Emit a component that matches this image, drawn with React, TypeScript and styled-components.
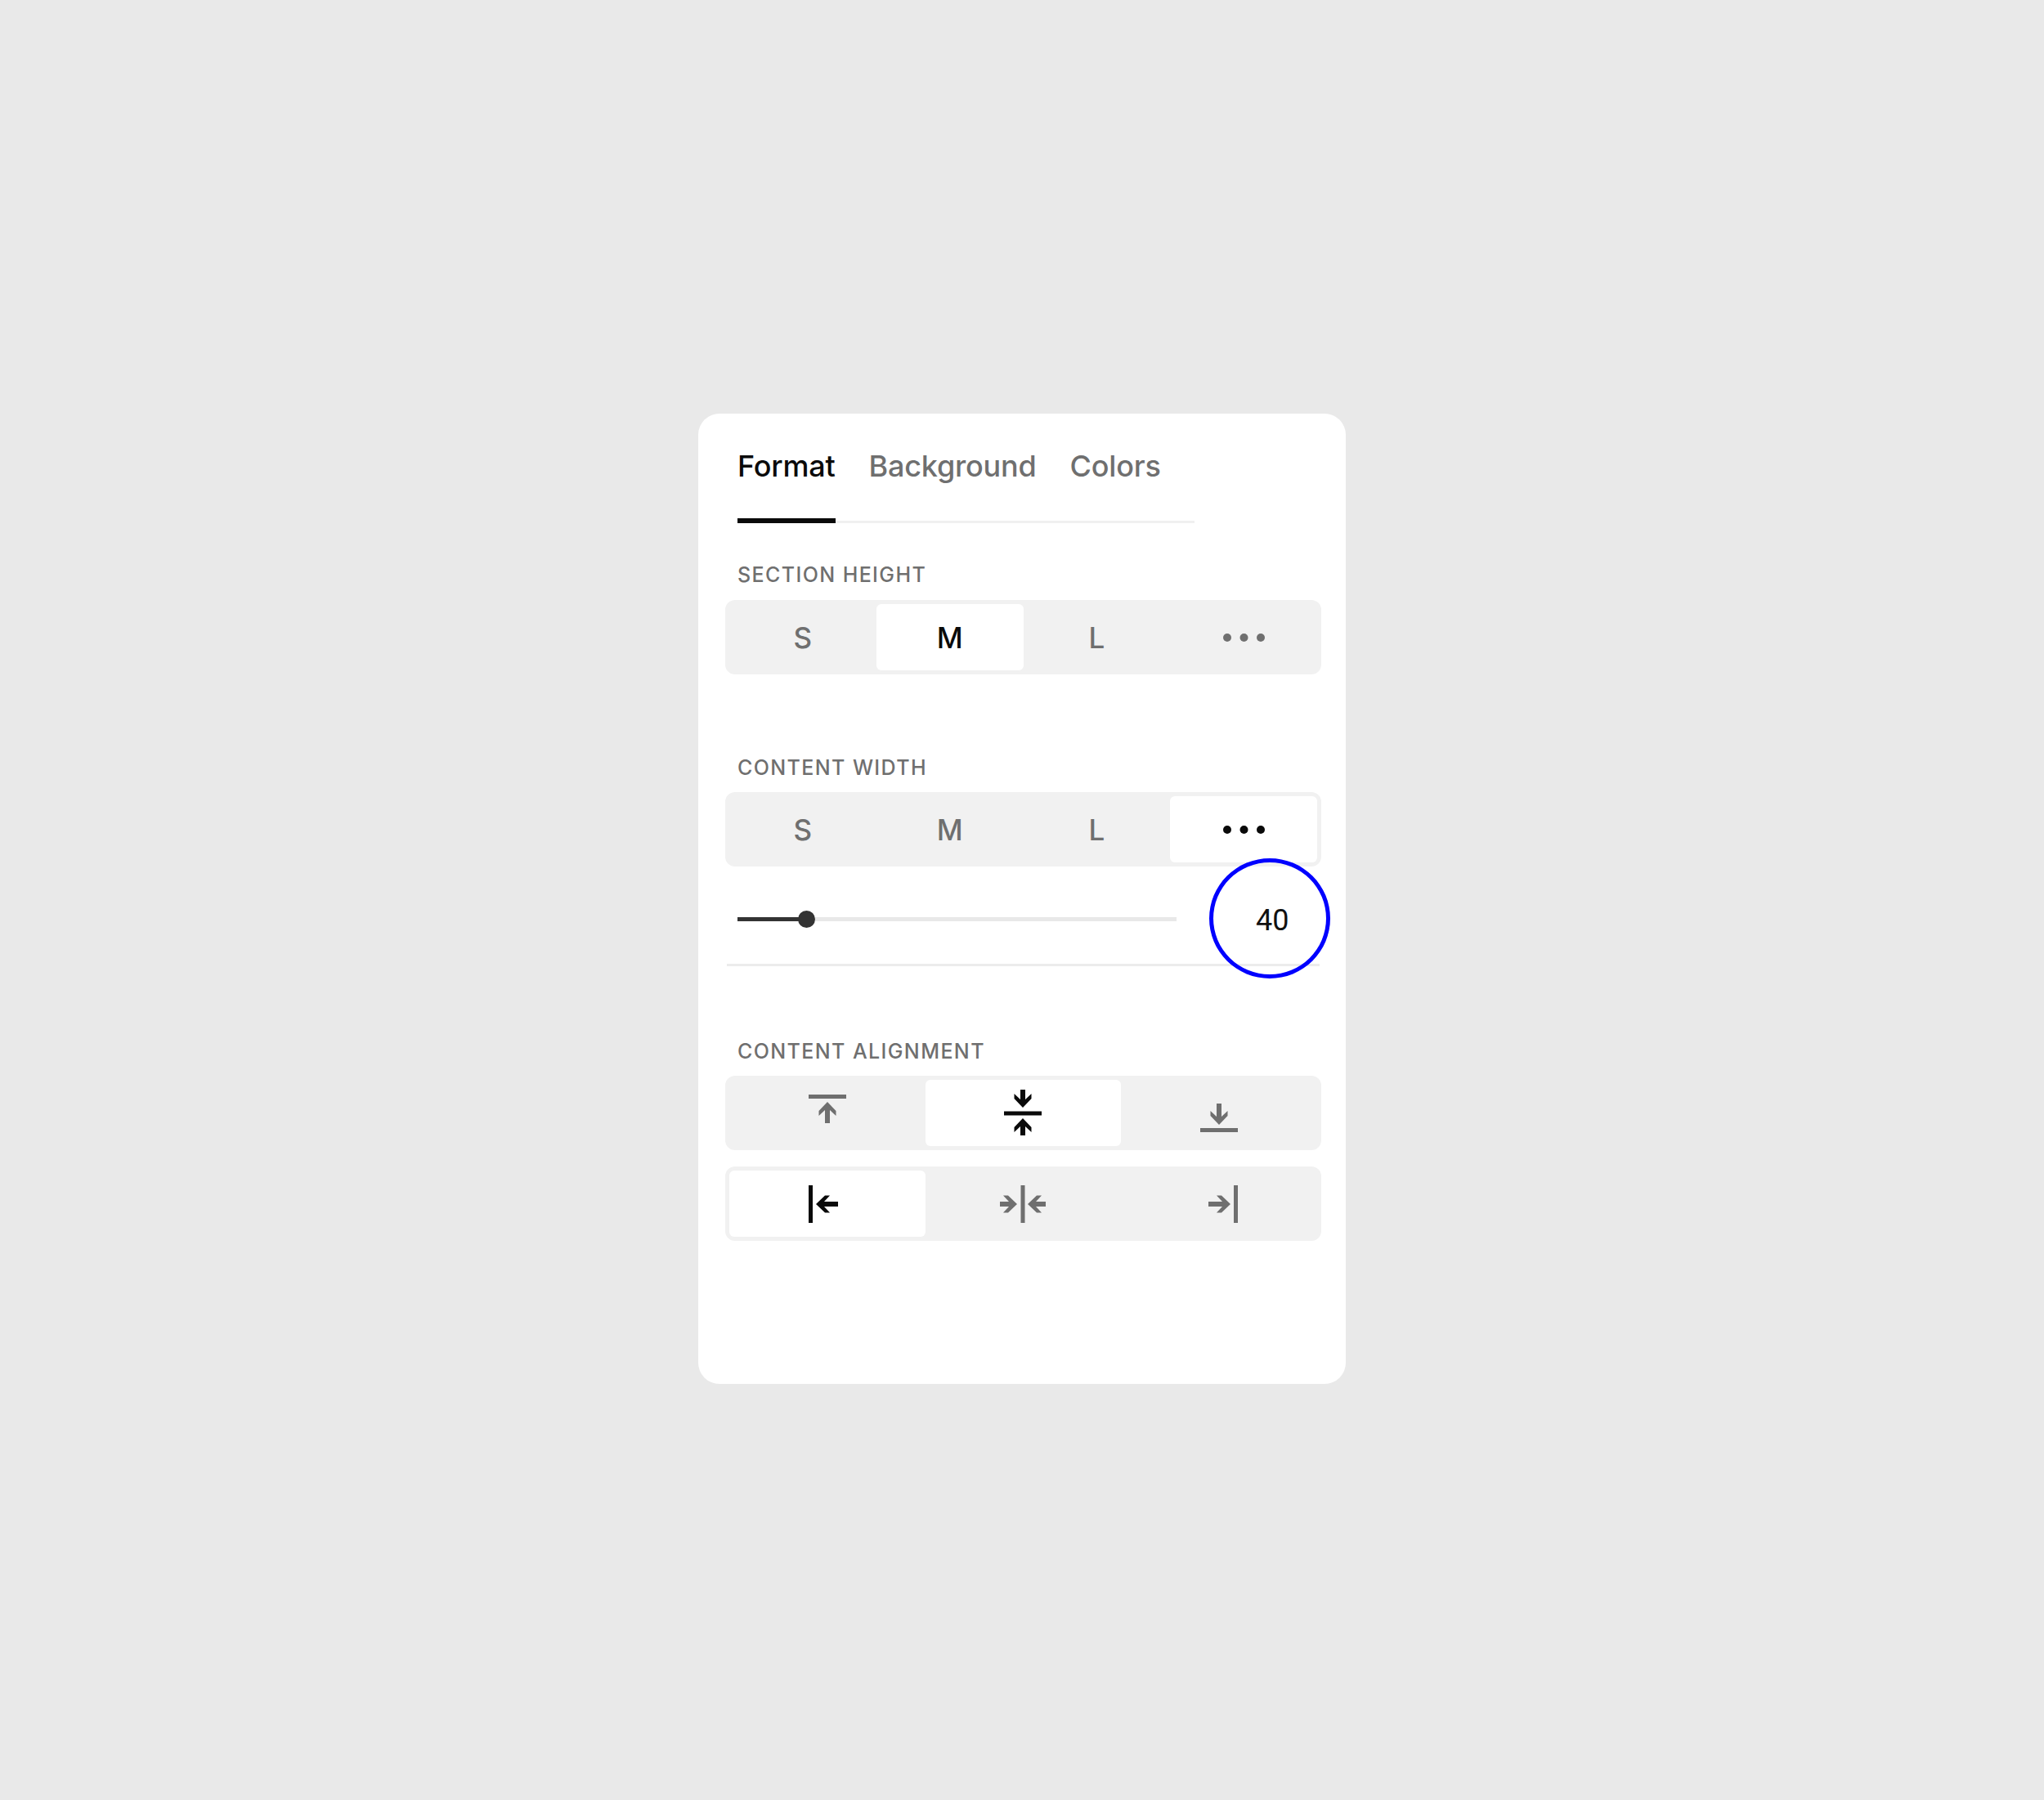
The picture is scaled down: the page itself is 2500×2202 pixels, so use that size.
import React from 'react';
import styled, { createGlobalStyle } from 'styled-components';

const GlobalStyle = createGlobalStyle`
  html, body {
    margin: 0;
    padding: 0;
    background: #e9e9e9;
    font-family: Inter, "Liberation Sans", sans-serif;
  }
`;

const Page = styled.div`
  min-height: 2202px;
  box-sizing: border-box;
  padding-top: 506px;
  display: flex;
  justify-content: center;
`;

const Card = styled.div`
  width: 792px;
  height: 1187px;
  box-sizing: border-box;
  background: #fff;
  border-radius: 26px;
  padding: 33px 30px 0 33px;
`;

const Tabs = styled.div`
  display: flex;
  gap: 41px;
  width: 559px;
  height: 101px;
  box-sizing: border-box;
  margin-left: 15px;
  border-bottom: 3px solid #f0f0f0;
`;

const Tab = styled.div<{ $active?: boolean }>`
  height: 101px;
  box-sizing: border-box;
  padding-top: 9px;
  font-size: 36px;
  line-height: 44px;
  font-weight: 500;
  letter-spacing: -0.2px;
  color: ${(p) => (p.$active ? '#0a0a0a' : '#6f6f6f')};
  border-bottom: ${(p) => (p.$active ? '6px solid #0a0a0a' : 'none')};
`;

const Label = styled.div<{ $top: number; $bottom: number }>`
  margin: ${(p) => p.$top}px 0 ${(p) => p.$bottom}px 15px;
  font-size: 25px;
  line-height: 30px;
  font-weight: 500;
  letter-spacing: 1.4px;
  color: #6f6f6f;
`;

const Segments = styled.div<{ $cols: number; $gap?: number }>`
  display: grid;
  grid-template-columns: repeat(${(p) => p.$cols}, 1fr);
  height: 91px;
  box-sizing: border-box;
  padding: 5px;
  margin-top: ${(p) => p.$gap ?? 0}px;
  background: #f1f1f1;
  border-radius: 12px;
`;

const Segment = styled.div<{ $active?: boolean }>`
  display: flex;
  align-items: center;
  justify-content: center;
  font-size: 35px;
  font-weight: 500;
  color: ${(p) => (p.$active ? '#0a0a0a' : '#6f6f6f')};
  background: ${(p) => (p.$active ? '#fff' : 'transparent')};
  border-radius: 6px;
`;

const SliderRow = styled.div`
  position: relative;
  display: flex;
  align-items: center;
  height: 122px;
  margin: 0 2px;
  padding: 10px 0 0 13px;
  box-sizing: border-box;
  border-bottom: 3px solid #ececec;
`;

const Track = styled.div`
  position: relative;
  width: 537px;
  height: 5px;
  background: #e8e8e8;
`;

const TrackFill = styled.div`
  height: 100%;
  background: #333;
`;

const Thumb = styled.div`
  position: absolute;
  top: -8px;
  width: 21px;
  height: 21px;
  margin-left: -10px;
  border-radius: 50%;
  background: #333;
`;

const Value = styled.div`
  margin-left: 97px;
  font-family: Roboto, sans-serif;
  font-size: 36px;
  line-height: 42px;
  color: #111;
  position: relative;
  top: 1px;
`;

const Ring = styled.div`
  position: absolute;
  left: 590px;
  top: -10px;
  width: 148px;
  height: 147px;
  box-sizing: border-box;
  border: 5px solid #0000ff;
  border-radius: 50%;
`;

const Dots = () => (
  <svg width="51" height="10" viewBox="0 0 51 10" fill="currentColor">
    <circle cx="5" cy="5" r="5" />
    <circle cx="25.5" cy="5" r="5" />
    <circle cx="46" cy="5" r="5" />
  </svg>
);

const UP = (len: number) => `M0 0L10.5 11V17L3 10V${len}H-3V10L-10.5 17V11Z`;

const Arrow = ({ x, y, angle, len = 26 }: { x: number; y: number; angle: number; len?: number }) => (
  <path d={UP(len)} transform={`translate(${x} ${y}) rotate(${angle})`} />
);

const IconBox = styled.svg`
  width: 46px;
  height: 46px;
  overflow: visible;
  fill: currentColor;
`;

const AlignTop = () => (
  <IconBox viewBox="0 0 46 46">
    <rect x="0" y="0" width="46" height="5" />
    <Arrow x={23} y={9} angle={0} />
  </IconBox>
);

const AlignMiddle = () => (
  <IconBox viewBox="0 0 46 46">
    <rect x="0" y="20.5" width="46" height="5" />
    <Arrow x={23} y={16} angle={180} len={22} />
    <Arrow x={23} y={29} angle={0} len={21} />
  </IconBox>
);

const AlignBottom = () => (
  <IconBox viewBox="0 0 46 46">
    <rect x="0" y="41" width="46" height="5" />
    <Arrow x={23} y={37} angle={180} />
  </IconBox>
);

const AlignLeft = () => (
  <IconBox viewBox="0 0 46 46">
    <rect x="0" y="0" width="5" height="46" />
    <Arrow x={9} y={23} angle={-90} len={27} />
  </IconBox>
);

const AlignCenter = () => (
  <IconBox viewBox="0 0 46 46">
    <rect x="20.5" y="0" width="5" height="46" />
    <Arrow x={16} y={23} angle={90} len={21} />
    <Arrow x={29} y={23} angle={-90} len={22} />
  </IconBox>
);

const AlignRight = () => (
  <IconBox viewBox="0 0 46 46">
    <rect x="41" y="0" width="5" height="46" />
    <Arrow x={37} y={23} angle={90} len={27} />
  </IconBox>
);

const sizes = ['S', 'M', 'L'];

export default function App() {
  return (
    <Page>
      <GlobalStyle />
      <Card>
        <Tabs>
          <Tab $active>Format</Tab>
          <Tab>Background</Tab>
          <Tab>Colors</Tab>
        </Tabs>

        <Label $top={48} $bottom={16}>SECTION HEIGHT</Label>
        <Segments $cols={4}>
          {sizes.map((s) => (
            <Segment key={s} $active={s === 'M'}>{s}</Segment>
          ))}
          <Segment><Dots /></Segment>
        </Segments>

        <Label $top={99} $bottom={15}>CONTENT WIDTH</Label>
        <Segments $cols={4}>
          {sizes.map((s) => (
            <Segment key={s}>{s}</Segment>
          ))}
          <Segment $active><Dots /></Segment>
        </Segments>
        <SliderRow>
          <Track>
            <TrackFill style={{ width: '15.6%' }} />
            <Thumb style={{ left: '15.6%' }} />
          </Track>
          <Value>40</Value>
          <Ring />
        </SliderRow>

        <Label $top={89} $bottom={15}>CONTENT ALIGNMENT</Label>
        <Segments $cols={3}>
          <Segment><AlignTop /></Segment>
          <Segment $active><AlignMiddle /></Segment>
          <Segment><AlignBottom /></Segment>
        </Segments>
        <Segments $cols={3} $gap={20}>
          <Segment $active><AlignLeft /></Segment>
          <Segment><AlignCenter /></Segment>
          <Segment><AlignRight /></Segment>
        </Segments>
      </Card>
    </Page>
  );
}
